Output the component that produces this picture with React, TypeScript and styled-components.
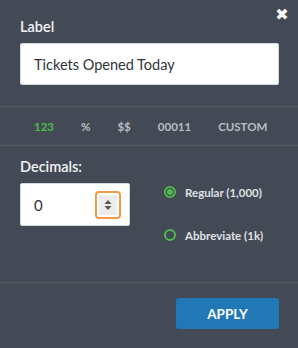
import React from "react";
import styled, { createGlobalStyle } from "styled-components";

const Global = createGlobalStyle`
  html, body { margin: 0; padding: 0; background: #444a55; }
  * { box-sizing: border-box; }
`;

const Panel = styled.div`
  position: relative;
  width: 298px;
  height: 348px;
  background: #444a55;
  font-family: Lato, "Open Sans", sans-serif;
  color: #ffffff;
  display: flex;
  flex-direction: column;
`;

const Close = styled.button`
  position: absolute;
  top: 7px;
  right: 9px;
  width: 14px;
  height: 16px;
  padding: 0;
  border: none;
  background: none;
  color: #ffffff;
  font: 700 16px/16px "DejaVu Sans", sans-serif;
  cursor: pointer;
`;

const Section = styled.div<{ $pt: number; $pb: number }>`
  padding: ${(p) => p.$pt}px 19px ${(p) => p.$pb}px 20px;
`;

const FieldLabel = styled.div`
  font-size: 14.5px;
  font-weight: 600;
  line-height: 18px;
  color: #f2f3f5;
`;

const TextInput = styled.div`
  margin-top: 7px;
  height: 42px;
  background: #ffffff;
  border: 1px solid #d6d9de;
  border-radius: 2px;
  padding: 0 13px;
  display: flex;
  align-items: center;
  font-size: 14.5px;
  color: #2f3338;
`;

const Divider = styled.div`
  height: 1px;
  flex-shrink: 0;
  background: #575b5e;
`;

const Tabs = styled.div`
  height: 38px;
  display: flex;
  align-items: center;
  gap: 27px;
  padding-left: 34px;
`;

const Tab = styled.span<{ $active?: boolean }>`
  font-size: 11.5px;
  font-weight: 700;
  color: ${(p) => (p.$active ? "#4dbb4f" : "#b9bdc3")};
`;

const DecRow = styled.div`
  display: flex;
  align-items: flex-start;
  gap: 34px;
  margin-top: 7px;
`;

const NumberInput = styled.div`
  width: 110px;
  height: 43px;
  background: #ffffff;
  border: 1px solid #d6d9de;
  border-radius: 2px;
  display: flex;
  align-items: center;
  justify-content: space-between;
  padding: 0 8px 0 13px;
  font-size: 15px;
  color: #2f3338;
`;

const Spinner = styled.div`
  width: 26px;
  height: 28px;
  border: 2px solid #f39a45;
  border-radius: 4px;
  padding: 2px;
  display: flex;
`;

const SpinInner = styled.div`
  flex: 1;
  background: #ececec;
  display: flex;
  align-items: center;
  justify-content: center;
`;

const Options = styled.div`
  display: flex;
  flex-direction: column;
  gap: 29px;
  padding-top: 2px;
`;

const Option = styled.label`
  display: flex;
  align-items: center;
  gap: 9px;
  height: 14px;
  font-size: 11.5px;
  font-weight: 700;
  color: #dfe1e4;
`;

const Radio = styled.span<{ $checked?: boolean }>`
  width: 12px;
  height: 12px;
  border-radius: 50%;
  border: 2px solid #4dbb4f;
  display: flex;
  align-items: center;
  justify-content: center;
  &::after {
    content: "";
    width: 6px;
    height: 6px;
    border-radius: 50%;
    background: ${(p) => (p.$checked ? "#4dbb4f" : "transparent")};
  }
`;

const Footer = styled.div`
  flex: 1;
  display: flex;
  justify-content: flex-end;
  align-items: flex-start;
  padding: 15px 19px 0 0;
`;

const ApplyButton = styled.button`
  width: 103px;
  height: 31px;
  border: none;
  border-radius: 3px;
  background: #2277b6;
  color: #ffffff;
  font-family: Lato, "Open Sans", sans-serif;
  font-size: 13.5px;
  font-weight: 700;
  cursor: pointer;
`;

export default function App() {
  return (
    <>
      <Global />
      <Panel>
        <Close aria-label="Close">✖</Close>
        <Section $pt={18} $pb={21}>
          <FieldLabel>Label</FieldLabel>
          <TextInput>Tickets Opened Today</TextInput>
        </Section>
        <Divider />
        <Tabs>
          <Tab $active>123</Tab>
          <Tab>%</Tab>
          <Tab>$$</Tab>
          <Tab>00011</Tab>
          <Tab>CUSTOM</Tab>
        </Tabs>
        <Divider />
        <Section $pt={12} $pb={40}>
          <FieldLabel>Decimals:</FieldLabel>
          <DecRow>
            <NumberInput>
              <span>0</span>
              <Spinner>
                <SpinInner>
                  <svg width="8" height="12" viewBox="0 0 8 12">
                    <path d="M4 1 L7.5 5 L0.5 5 Z" fill="#555" />
                    <path d="M4 11 L7.5 7 L0.5 7 Z" fill="#555" />
                  </svg>
                </SpinInner>
              </Spinner>
            </NumberInput>
            <Options>
              <Option>
                <Radio $checked />
                Regular (1,000)
              </Option>
              <Option>
                <Radio />
                Abbreviate (1k)
              </Option>
            </Options>
          </DecRow>
        </Section>
        <Divider />
        <Footer>
          <ApplyButton>APPLY</ApplyButton>
        </Footer>
      </Panel>
    </>
  );
}
